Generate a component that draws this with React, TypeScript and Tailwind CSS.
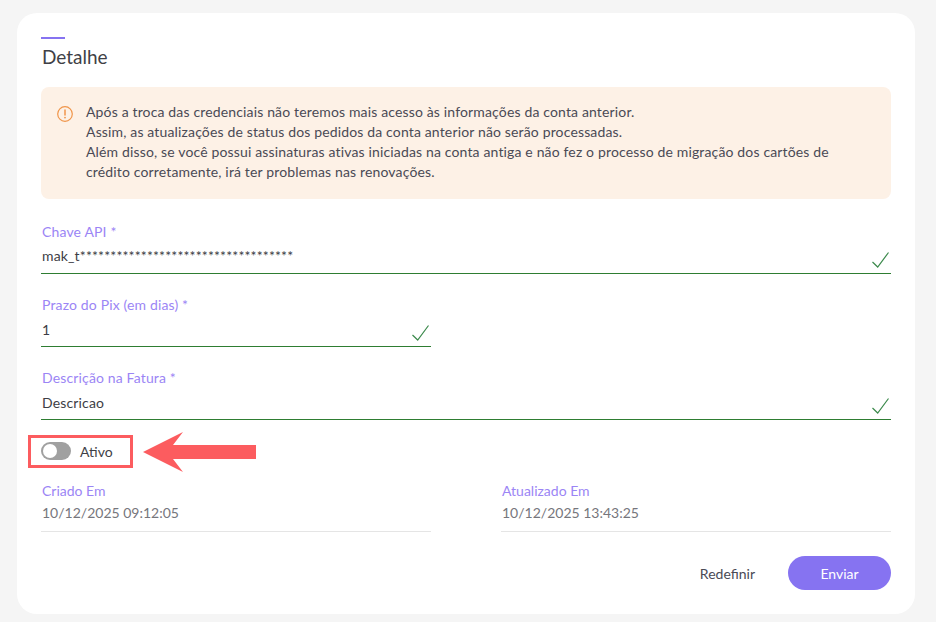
import React from 'react';

const Check: React.FC = () => (
  <svg width="18" height="16" viewBox="0 0 18 16" fill="none" className="absolute right-[1px] bottom-[6px]">
    <path d="M0.5 10 L5.7 15 L16.5 0.5" stroke="#3c8a4c" strokeWidth="1.2" />
  </svg>
);

const Field: React.FC<{ label: string; value: string; className?: string; valueClass?: string }> = ({
  label,
  value,
  className,
  valueClass = 'mt-[5px]',
}) => (
  <div className={`relative h-[52px] pl-[1px] ${className ?? ''}`}>
    <div className="text-[14px] leading-[20px] tracking-[0.15px] text-[#9b85f5]">{label}</div>
    <div className={`${valueClass} text-[14px] leading-[20px] tracking-[0.15px] text-[#3d3d45]`}>{value}</div>
    <div className="absolute left-0 right-0 bottom-0 h-[1px] bg-[#2e7d32]" />
    <Check />
  </div>
);

const ReadOnly: React.FC<{ label: string; value: string }> = ({ label, value }) => (
  <div className="w-[390px] h-[51px] pl-[1px] border-b border-[#e5e5e5]">
    <div className="text-[14px] leading-[20px] text-[#9b85f5]">{label}</div>
    <div className="mt-[2px] text-[14px] leading-[20px] text-[#76767c]">{value}</div>
  </div>
);

export default function App() {
  return (
    <div className="w-[936px] h-[622px] bg-[#f5f5f5] pt-[13px] pl-[17px] font-['Lato','Noto_Sans',sans-serif] overflow-hidden">
      <div className="relative w-[898px] h-[601px] bg-white rounded-[20px] px-[24px] pt-[24px]">
        <div className="w-[24px] h-[2px] bg-[#8673f1]" />
        <h2 className="mt-[6px] pl-[1px] text-[19px] leading-[24px] text-[#3f3f46]">Detalhe</h2>

        <div className="mt-[18px] h-[112px] rounded-[8px] bg-[#fdf1e6] flex pl-[16px] pt-[15px]">
          <svg width="16" height="16" viewBox="0 0 16 16" fill="none" className="mt-[4px] shrink-0">
            <circle cx="8" cy="8" r="7.3" stroke="#f0954a" strokeWidth="1.2" />
            <path d="M8 4 V9" stroke="#f0954a" strokeWidth="1.5" strokeLinecap="round" />
            <circle cx="8" cy="11.6" r="0.9" fill="#f0954a" />
          </svg>
          <p className="ml-[13px] w-[770px] text-[14px] leading-[20px] tracking-[0.15px] text-[#4a4a55]">
            Após a troca das credenciais não teremos mais acesso às informações da conta anterior.
            <br />
            Assim, as atualizações de status dos pedidos da conta anterior não serão processadas.
            <br />
            Além disso, se você possui assinaturas ativas iniciadas na conta antiga e não fez o processo de migração dos cartões de crédito corretamente, irá ter problemas nas renovações.
          </p>
        </div>

        <Field className="mt-[23px]" valueClass="mt-[4px]" label="Chave API *" value="mak_t***********************************" />
        <Field className="mt-[21px] w-[390px]" label="Prazo do Pix (em dias) *" value="1" />
        <Field className="mt-[21px]" label="Descrição na Fatura *" value="Descricao" />

        <div className="mt-[22px] flex items-center h-[18px]">
          <div className="relative w-[30px] h-[18px] rounded-full bg-[#a0a0a0]">
            <div className="absolute left-[2px] top-[2px] w-[14px] h-[14px] rounded-full bg-white" />
          </div>
          <span className="ml-[9px] text-[14px] text-[#3f3f46]">Ativo</span>
        </div>

        <div className="mt-[21px] flex justify-between">
          <ReadOnly label="Criado Em" value="10/12/2025 09:12:05" />
          <ReadOnly label="Atualizado Em" value="10/12/2025 13:43:25" />
        </div>

        <div className="mt-[24px] flex justify-end items-center">
          <button className="text-[14px] text-[#4a4a55] mr-[33px]">Redefinir</button>
          <button className="w-[103px] h-[34px] rounded-full bg-[#8673f1] text-[14px] text-white">Enviar</button>
        </div>

        <div className="absolute left-[11px] top-[422px] w-[105px] h-[33px] border-[3px] border-[#fc5c5f]" />
        <svg width="114" height="40" viewBox="0 0 114 40" className="absolute left-[126px] top-[419px]">
          <polygon points="0,20 40,0 30,13 113,13 113,27 30,27 40,40" fill="#fc5c5f" />
        </svg>
      </div>
    </div>
  );
}
